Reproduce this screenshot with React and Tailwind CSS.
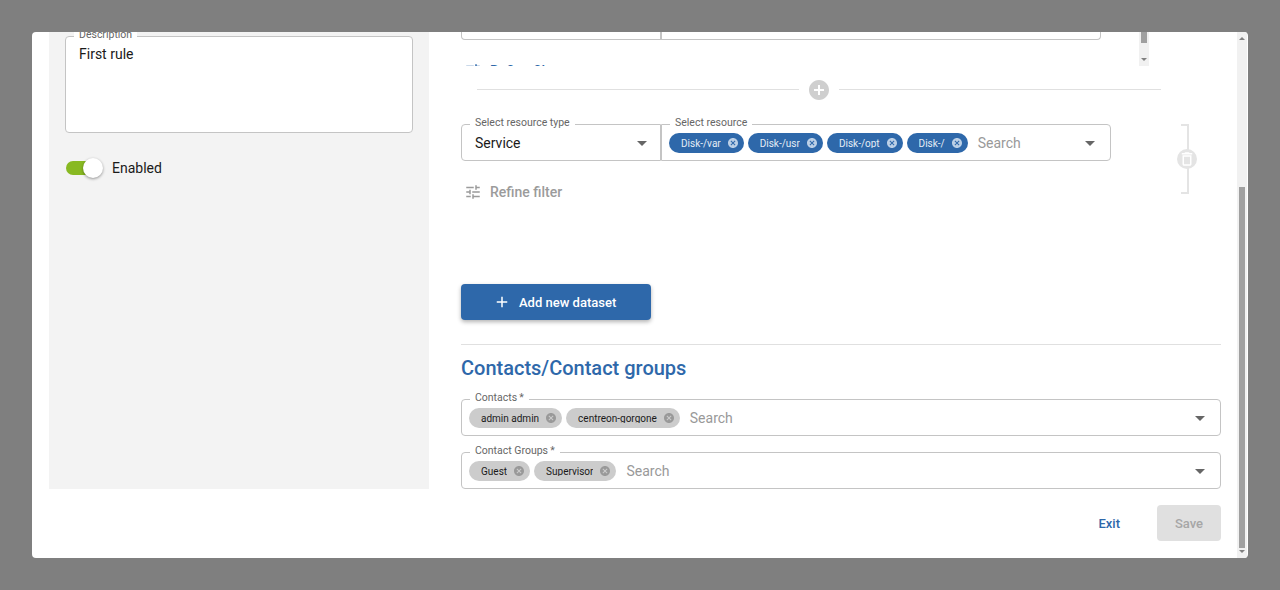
const blue = "#2e68aa";

const Svg = ({ d, className, fill = "currentColor" }) => (
    <svg viewBox="0 0 24 24" fill={fill} className={className}>
        <path d={d} />
    </svg>
);

const CANCEL = "M12 2C6.47 2 2 6.47 2 12s4.47 10 10 10 10-4.47 10-10S17.53 2 12 2zm5 13.59L15.59 17 12 13.41 8.41 17 7 15.59 10.59 12 7 8.41 8.41 7 12 10.59 15.59 7 17 8.41 13.41 12 17 15.59z";
const TUNE = "M3 17v2h6v-2H3zM3 5v2h10V5H3zm10 16v-2h8v-2h-8v-2h-2v6h2zM7 9v2H3v2h4v2h2V9H7zm14 4v-2H11v2h10zm-6-4h2V7h4V5h-4V3h-2v6z";
const ARROW = "M7 10l5 5 5-5z";
const ADD = "M19 13h-6v6h-2v-6H5v-2h6V5h2v6h6v2z";
const ADD_CIRCLE = "M12 2C6.48 2 2 6.48 2 12s4.48 10 10 10 10-4.48 10-10S17.52 2 12 2zm5 11h-4v4h-2v-4H7v-2h4V7h2v4h4v2z";
const TRASH = "M6 19c0 1.1.9 2 2 2h8c1.1 0 2-.9 2-2V7H6v12zM8 9h8v10H8V9zm7.5-5l-1-1h-5l-1 1H5v2h14V4z";

const Chip = ({ label, dark }) => (
    <div className={dark
        ? "h-5 flex items-center rounded-full bg-[#2e68aa] text-[#e4ecf5] pl-3 pr-[5px] gap-[6px] shrink-0"
        : "h-5 flex items-center rounded-full bg-[#cccccc] text-[#1a1a1a] pl-3 pr-[5px] gap-[6px] shrink-0"}>
        <span className="block h-[10px] overflow-hidden text-[10px] leading-[11px] whitespace-nowrap">{label}</span>
        <Svg d={CANCEL} className={dark ? "w-3 h-3 text-[#bcd0e6]" : "w-3 h-3 text-[#999999]"} />
    </div>
);

const Legend = ({ children }) => (
    <span className="absolute left-[8px] -top-[9px] bg-white px-[5px] text-[10.5px] leading-[14px] text-[#666666] whitespace-nowrap">{children}</span>
);

const Caret = ({ className }) => (
    <Svg d={ARROW} className={"w-6 h-6 text-[#666666] shrink-0 " + (className || "")} />
);

const MultiField = ({ label, chips }) => (
    <div className="relative h-[37px] border border-[#c4c4c4] rounded-[4px] flex items-center pl-[7px] pr-2 bg-white">
        <Legend>{label}</Legend>
        <div className="flex items-center gap-1">
            {chips.map((c) => <Chip key={c} label={c} />)}
        </div>
        <span className="ml-[10px] text-sm text-[#999999]">Search</span>
        <Caret className="ml-auto" />
    </div>
);

const RefineFilter = ({ className }) => (
    <div className={"flex items-center gap-2 " + (className || "")}>
        <Svg d={TUNE} className="w-[18px] h-[18px]" />
        <span className="text-sm font-medium">Refine filter</span>
    </div>
);

export default function App() {
    return (
        <div className="w-[1280px] h-[590px] bg-[#7f7f7f] pt-8 pl-8 overflow-hidden" style={{ fontFamily: "Roboto, sans-serif" }}>
            <div className="w-[1216px] h-[526px] bg-white rounded-[4px] flex overflow-hidden pl-[17px] pr-px">
                {/* left panel */}
                <div className="w-[380px] h-[457px] bg-[#f3f3f3] pl-4 pt-1 shrink-0">
                    <div className="relative w-[348px] h-[97px] border border-[#c4c4c4] rounded-[4px] bg-white px-[13px] pt-[7px]">
                        <Legend>Description</Legend>
                        <p className="text-sm leading-5 text-[#1a1a1a]">First rule</p>
                    </div>
                    <div className="flex items-center mt-[25px] h-5">
                        <div className="relative w-[38px] h-5 ml-px">
                            <div className="absolute left-0 top-[3px] w-[30px] h-[14px] rounded-full bg-[#88b922]" />
                            <div className="absolute left-[17px] top-0 w-5 h-5 rounded-full bg-white shadow-[0_1px_3px_rgba(0,0,0,0.4)]" />
                        </div>
                        <span className="ml-[8px] text-sm text-[#1a1a1a]">Enabled</span>
                    </div>
                </div>

                {/* right column */}
                <div className="w-[760px] ml-8 shrink-0">
                    <div className="h-[34px] flex overflow-hidden">
                        <div className="w-[640px] overflow-hidden">
                            <div className="h-2 border border-t-0 border-[#c4c4c4] rounded-b-[4px] pl-[198px]">
                                <div className="w-[2px] h-full bg-[#c4c4c4]" />
                            </div>
                            <RefineFilter className="mt-[21px] ml-[3px] text-[#2e68aa]" />
                        </div>
                        <div className="ml-[38px] w-[10px] h-[34px] bg-[#f1f1f1] flex flex-col items-center">
                            <div className="w-[6px] h-[11px] bg-[#a0a0a0]" />
                            <div className="mt-[15px] w-0 h-0 border-x-[3px] border-x-transparent border-t-[3px] border-t-[#808080]" />
                        </div>
                    </div>

                    <div className="flex items-center ml-4 w-[684px] h-5 mt-[14px]">
                        <div className="flex-1 h-px mb-[2px] bg-[#e0e0e0]" />
                        <Svg d={ADD_CIRCLE} className="w-6 h-6 mx-2 text-[#cfcfcf]" />
                        <div className="flex-1 h-px mb-[2px] bg-[#e0e0e0]" />
                    </div>

                    <div className="flex mt-6 relative">
                        <div className="relative w-[200px] h-[37px] border border-[#c4c4c4] rounded-l-[4px] flex items-center pl-[13px] pr-[6px]">
                            <Legend>Select resource type</Legend>
                            <span className="text-sm text-[#1a1a1a]">Service</span>
                            <Caret className="ml-auto" />
                        </div>
                        <div className="relative w-[450px] h-[37px] border border-[#c4c4c4] rounded-r-[4px] flex items-center pl-[7px] pr-[8px]">
                            <Legend>Select resource</Legend>
                            <div className="flex items-center gap-1">
                                <Chip dark label="Disk-/var" />
                                <Chip dark label="Disk-/usr" />
                                <Chip dark label="Disk-/opt" />
                                <Chip dark label="Disk-/" />
                            </div>
                            <span className="ml-[10px] text-sm text-[#999999]">Search</span>
                            <Caret className="ml-auto" />
                        </div>
                        <div className="absolute left-[720px] top-0 w-2 h-[70px] border-y-2 border-r-2 border-[#e4e4e4]" />
                        <div className="absolute left-[716px] top-[25px] w-5 h-5 rounded-full bg-[#e4e4e4] flex items-center justify-center">
                            <Svg d={TRASH} className="w-[18px] h-[18px] text-white" />
                        </div>
                    </div>

                    <RefineFilter className="mt-[21px] ml-[3px] text-[#9b9b9b]" />

                    <button className="mt-[82px] w-[190px] h-9 rounded-[4px] bg-[#2e68aa] text-white flex items-center justify-start pl-8 gap-2 shadow-[0_2px_4px_rgba(0,0,0,0.3)] text-[13px] font-medium">
                        <Svg d={ADD} className="w-[18px] h-[18px]" />
                        <span className="pt-[2px]">Add new dataset</span>
                    </button>

                    <div className="h-px bg-[#e0e0e0] mt-6" />

                    <h2 className="mt-[11px] text-xl leading-[24px] font-medium" style={{ color: blue }}>Contacts/Contact groups</h2>

                    <div className="mt-[19px]">
                        <MultiField label={"Contacts\u2009*"} chips={["admin admin", "centreon-gorgone"]} />
                    </div>
                    <div className="mt-4">
                        <MultiField label={"Contact Groups\u2009*"} chips={["Guest", "Supervisor"]} />
                    </div>

                    <div className="flex items-center justify-end mt-4">
                        <span className="pt-[2px] text-[13px] font-medium text-[#2e68aa] mr-[37px]">Exit</span>
                        <div className="w-16 h-9 pt-[2px] rounded-[4px] bg-[#e0e0e0] text-[#a6a6a6] text-[13px] font-medium flex items-center justify-center">Save</div>
                    </div>
                </div>

                {/* scrollbar */}
                <div className="ml-4 w-[10px] h-full bg-[#f1f1f1] flex flex-col items-center shrink-0">
                    <div className="mt-[5px] w-0 h-0 border-x-[3px] border-x-transparent border-b-[3px] border-b-[#808080]" />
                    <div className="mt-[147px] w-[6px] flex-1 bg-[#a0a0a0]" />
                    <div className="mt-[2px] mb-[5px] w-0 h-0 border-x-[3px] border-x-transparent border-t-[3px] border-t-[#808080]" />
                </div>
            </div>
        </div>
    );
}
